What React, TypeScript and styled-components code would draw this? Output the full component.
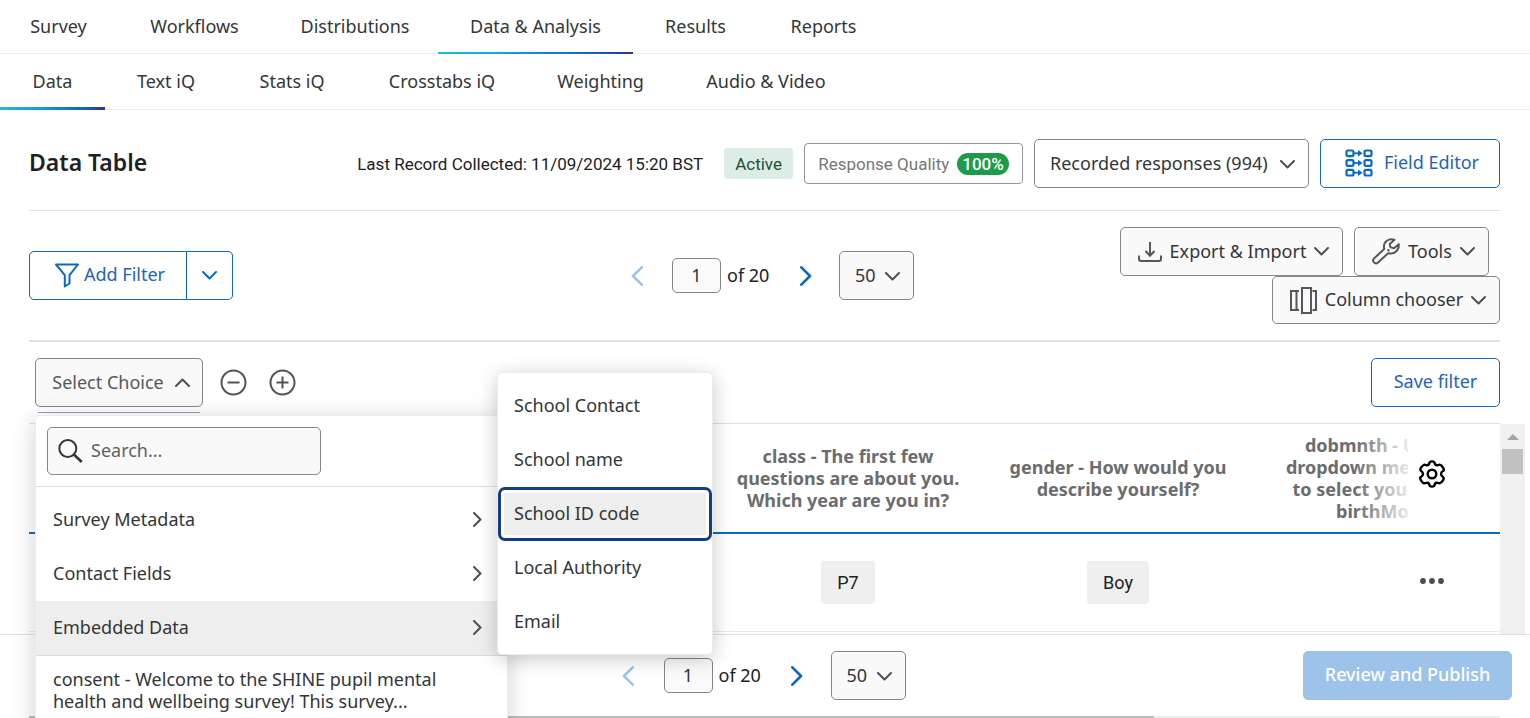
import React from "react";
import styled, { createGlobalStyle, css } from "styled-components";

const blue = "#0b6ac0";
const ink = "#32363a";

const GlobalStyle = createGlobalStyle`
  *, *::before, *::after { box-sizing: border-box; }
  body { margin: 0; background: #fff; }
  body, button, input, select {
    font-family: "Noto Sans", "Open Sans", sans-serif;
    font-size: 18px;
    line-height: 22px;
    color: ${ink};
  }
`;

const compact = css`
  font-family: Roboto, "Liberation Sans", sans-serif;
  font-size: 17px;
`;

const Page = styled.div`
  display: flex;
  flex-direction: column;
  height: 100vh;
  overflow: hidden;
`;

const Nav = styled.nav<{ $sub?: boolean }>`
  display: flex;
  height: ${(p) => (p.$sub ? 56 : 54)}px;
  flex: none;
  border-bottom: 1px solid #ececee;
`;

const Tab = styled.a<{ $w: number; $active?: boolean; $line?: number }>`
  display: flex;
  align-items: center;
  justify-content: center;
  width: ${(p) => p.$w}px;
  margin-bottom: -1px;
  color: ${ink};
  text-decoration: none;
  white-space: nowrap;
  border-bottom: ${(p) => p.$line || 2}px solid transparent;
  ${(p) =>
    p.$active &&
    css`
      border-image: linear-gradient(to right, #21c0bf, #12a0dc 35%, #1668bd 75%, #32318d) 1;
    `}
`;

const Main = styled.main`
  flex: 1;
  min-height: 0;
  display: flex;
  flex-direction: column;
  padding-left: 29px;
`;

const Section = styled.section`
  margin-right: 30px;
`;

const TitleRow = styled(Section)`
  display: flex;
  align-items: center;
  gap: 11px;
  padding: 29px 0 22px;
  border-bottom: 1px solid #e0e0e2;
`;

const Title = styled.h1`
  flex: 1;
  margin: 0;
  padding-bottom: 3px;
  font-size: 23px;
  line-height: 28px;
  font-weight: 600;
  color: #202124;
`;

const Collected = styled.p`
  ${compact}
  margin: 0 10px 0 0;
  color: #202124;
  white-space: nowrap;
`;

const Status = styled.span`
  ${compact}
  padding: 5px 11px 4px;
  border-radius: 4px;
  background: #dcede6;
  color: #1f4f38;
`;

const Quality = styled.button`
  ${compact}
  display: flex;
  align-items: center;
  justify-content: center;
  gap: 8px;
  width: 219px;
  height: 41px;
  padding: 0;
  border: 1px solid #949496;
  border-radius: 4px;
  background: #fff;
  color: #75777a;
  white-space: nowrap;
`;

const Pill = styled.span`
  padding: 0 5px;
  border-radius: 11px;
  background: #1f9a4b;
  color: #fff;
  font-weight: 500;
`;

const Button = styled.button<{ $w: number; $kind?: "plain" | "outline" | "primary"; $gap?: number; $inset?: boolean }>`
  display: flex;
  align-items: center;
  justify-content: center;
  gap: ${(p) => p.$gap || 8}px;
  width: ${(p) => p.$w}px;
  height: 49px;
  padding: 0 0 2px ${(p) => (p.$inset ? 4 : 0)}px;
  border: 1px solid #858688;
  border-radius: 5px;
  background: #f9f9f9;
  white-space: nowrap;
  ${(p) =>
    p.$kind === "outline" &&
    css`
      padding-bottom: 3px;
      border-color: ${blue};
      background: #fff;
      color: #2264bd;
    `}
  ${(p) =>
    p.$kind === "primary" &&
    css`
      padding-bottom: 3px;
      border-color: #9dc3ea;
      background: #9dc3ea;
      color: #fff;
      font-weight: 500;
    `}

  svg { margin-top: 2px; }
`;

const SplitButton = styled.div`
  display: flex;

  button:first-child { border-radius: 5px 0 0 5px; }
  button:last-child { border-radius: 0 5px 5px 0; border-left: 0; }
`;

const SelectBox = styled.label<{ $w: number; $filled?: boolean }>`
  position: relative;
  display: block;
  width: ${(p) => p.$w}px;

  select {
    appearance: none;
    display: block;
    width: 100%;
    height: 49px;
    padding: 0 0 2px 15px;
    border: 1px solid #858688;
    border-radius: 5px;
    background: ${(p) => (p.$filled ? "#f9f9f9" : "#fff")};
  }
  svg {
    position: absolute;
    right: 14px;
    top: 21px;
    pointer-events: none;
  }
`;

const ToolBar = styled(Section)`
  display: grid;
  grid-template-columns: 1fr auto 1fr;
  align-items: center;
  padding: 16px 0;
  border-bottom: 2px solid #e2e2e4;
`;

const Tools = styled.div`
  display: flex;
  flex-direction: column;
  align-items: flex-end;

  > button { height: 48px; }
`;

const ToolLine = styled.div`
  display: flex;
  gap: 11px;
  margin-right: 11px;
`;

const PagerBox = styled.div`
  display: flex;
  align-items: center;
`;

const IconButton = styled.button`
  display: flex;
  align-items: center;
  justify-content: center;
  padding: 0;
  border: 0;
  background: none;
`;

const PageArrow = styled(IconButton)`
  width: 43px;
  height: 49px;
`;

const PageNumber = styled.input`
  width: 49px;
  height: 35px;
  margin-left: 14px;
  padding: 0 0 2px;
  border: 1px solid #858688;
  border-radius: 5px;
  background: #fafafa;
  text-align: center;
`;

const PageTotal = styled.span`
  width: 44px;
  margin: 0 13px 0 6px;
  padding-bottom: 2px;
  color: #202124;
  white-space: nowrap;
`;

const FilterRow = styled(Section)`
  display: flex;
  align-items: center;
  gap: 22px;
  padding: 16px 0 16px 6px;

  > button:last-child { margin-left: auto; }
`;

const Picker = styled.div`
  position: relative;
  margin-right: -5px;

  > button { color: #55585b; }
`;

const FocusLine = styled.span`
  position: absolute;
  top: 54px;
  left: 3px;
  right: 3px;
  height: 1px;
  background: #8c9fc9;
`;

const Menu = styled.div`
  position: absolute;
  z-index: 5;
  top: 57px;
  left: 0;
  width: 473px;
  border: 1px solid #ececee;
  border-radius: 4px;
  background: #fff;
  box-shadow: 0 4px 24px rgba(0, 0, 0, 0.18);
`;

const SearchArea = styled.div`
  padding: 11px 11px 11px;
  border-bottom: 1px solid #e0e0e2;
`;

const SearchField = styled.label`
  display: flex;
  align-items: center;
  gap: 8px;
  width: 274px;
  height: 48px;
  padding-left: 10px;
  border: 1px solid #858688;
  border-radius: 5px;
  background: #f9f9f9;

  input {
    flex: 1;
    min-width: 0;
    padding: 0 0 2px;
    border: 0;
    outline: 0;
    background: none;
  }
  input::placeholder { color: #5f6265; opacity: 1; }
`;

const MenuItem = styled.button<{ $active?: boolean }>`
  display: flex;
  align-items: center;
  justify-content: space-between;
  width: 100%;
  height: 54px;
  padding: 0 25px 2px 17px;
  border: 0;
  background: ${(p) => (p.$active ? "#eee" : "none")};
  text-align: left;
`;

const MenuList = styled.div`
  padding-top: 6px;
  border-bottom: 1px solid #dcdcde;
`;

const QuestionItem = styled(MenuItem)`
  height: 80px;
  padding-right: 50px;
  align-items: flex-start;
  padding-top: 12px;
`;

const SubMenu = styled.div`
  position: absolute;
  z-index: 6;
  top: 14px;
  left: 462px;
  width: 216px;
  padding: 6px 0 5px;
  border: 1px solid #ececee;
  border-radius: 5px;
  background: #fff;
  box-shadow: 0 4px 20px rgba(0, 0, 0, 0.22);

  ${MenuItem} { padding: 0 16px 2px; }
`;

const FocusedItem = styled(MenuItem)`
  border: 3px solid #123f84;
  border-radius: 7px;
  background: #eee;
  box-shadow: inset 0 0 0 3px #fff;

  ${SubMenu} & { padding: 0 13px 2px; }
`;

const TableArea = styled.div`
  flex: 1;
  min-height: 0;
  display: flex;
  margin-right: 5px;
`;

const DataTable = styled.table`
  flex: 1;
  align-self: flex-start;
  table-layout: fixed;
  width: 100%;
  border-collapse: separate;
  border-spacing: 0;
  border-top: 1px solid #e0e0e2;

  th {
    height: 110px;
    padding: 0;
    border-bottom: 2px solid ${blue};
    color: #6a6c6f;
    font-weight: 700;
    line-height: 22px;
  }
  td {
    height: 98px;
    padding: 0;
    border-bottom: 1px solid #e8e8ea;
    text-align: center;
  }
`;

const Col = styled.col<{ $w?: number }>`
  width: ${(p) => (p.$w ? `${p.$w}px` : "auto")};
`;

const Heading = styled.div`
  width: 270px;
  padding-bottom: 1px;
  text-align: center;
  white-space: pre-line;
`;

const RowAction = styled(IconButton)`
  width: 48px;
  height: 48px;
  margin: 0 0 4px 53px;
`;

const FadeCell = styled.th`
  position: relative;
  background: linear-gradient(to right, rgba(255, 255, 255, 0), rgba(255, 255, 255, 0.85) 53px, #fff 53px);

  ${RowAction} { margin-bottom: 8px; }
`;

const Value = styled.span`
  display: inline-block;
  padding: 11px 16px 10px;
  border-radius: 4px;
  background: #efefef;
  color: #202124;
  font-family: Roboto, "Liberation Sans", sans-serif;
`;

const ScrollTrack = styled.div`
  display: flex;
  flex-direction: column;
  align-items: center;
  width: 25px;
  margin-top: 1px;
  padding-top: 10px;
  background: #f0f0f0;
`;

const ScrollThumb = styled.div`
  width: 21px;
  height: 25px;
  margin-top: 9px;
  background: #c1c1c1;
`;

const Footer = styled.footer`
  flex: none;
  display: grid;
  grid-template-columns: 1fr auto 1fr;
  align-items: center;
  padding: 16px 18px 16px 0;
  border-top: 1px solid #e0e0e2;

  > button { grid-column: 3; justify-self: end; }
  > div { grid-column: 2; }
`;

const BottomScroll = styled.div`
  flex: none;
  height: 2px;
  margin: 0 30px 0 29px;
  background: #eee;
`;

const BottomThumb = styled.div`
  width: 76.5%;
  height: 2px;
  background: #bdbdbd;
`;

type Dir = "up" | "down" | "left" | "right";

function Chevron({ dir = "down", color = "#4d5054", big }: { dir?: Dir; color?: string; big?: boolean }) {
  const sideways = dir === "left" || dir === "right";
  const points = { up: "1,8 7.5,1.5 14,8", down: "1,1 7.5,7.5 14,1", left: "8,1 1.5,7.5 8,14", right: "1,1 7.5,7.5 1,14" }[dir];
  const w = sideways ? 9 : 15;
  const h = sideways ? 15 : 9;
  return (
    <svg
      width={big ? 12 : w}
      height={big ? 20 : h}
      viewBox={`0 0 ${w} ${h}`}
      fill="none"
      stroke={color}
      strokeWidth={2}
      strokeLinejoin="round"
      strokeLinecap="round"
      aria-hidden="true"
    >
      <polyline points={points} />
    </svg>
  );
}

const FieldIcon = () => (
  <svg width="28" height="28" viewBox="0 0 28 28" fill="none" stroke={blue} strokeWidth="2.2" aria-hidden="true">
    {[1.5, 11.2, 20.9].map((y) => (
      <g key={y}>
        <rect x="1.5" y={y} width="7" height="5.6" rx="1.500" />
        <rect x="19.5" y={y} width="7" height="5.6" rx="1.500" />
        <path d={`M9 ${y + 2.8}h5`} strokeWidth="1.800" />
        <path d={`M13 ${y - 0.4}l4.600 3.200-4.600 3.200z`} fill={blue} stroke="none" />
      </g>
    ))}
  </svg>
);

const FunnelIcon = () => (
  <svg width="24" height="25" viewBox="0 0 24 25" fill="none" stroke={blue} strokeWidth="2" strokeLinejoin="round" aria-hidden="true">
    <path d="M1 1.5h22l-8.5 10.7v8.3L9.8 23.5V12.2Z" />
  </svg>
);

const DownloadIcon = () => (
  <svg width="24" height="22" viewBox="0 0 24 22" fill="none" stroke="#55575a" strokeWidth="2" aria-hidden="true">
    <path d="M12 1v14M7.5 10l4.5 4.8 4.5-4.8" />
    <path d="M1 14.500v3.500q0 2 2 2h18q2 0 2-2v-3.500" />
  </svg>
);

const WrenchIcon = () => (
  <svg width="28" height="27" viewBox="0 0 28 27" fill="none" stroke="#55575a" strokeWidth="2" strokeLinejoin="round" aria-hidden="true">
    <path d="M22.500 1.800C17.500-.3 10.500 3.500 12.200 11L2 20.500c-2.500 2.500 1 6.500 4 4l10.200-9.300c6.500 1.800 11-3.200 10.600-9L22 10.200l-3.400-.8-.9-3.300Z" />
    <path d="M15.500 11.500l1.800 1.600" />
  </svg>
);

const ColumnsIcon = () => (
  <svg width="27" height="27" viewBox="0 0 27 27" fill="none" stroke="#55575a" strokeWidth="2" aria-hidden="true">
    <path d="M9 4H1v19h8M6.500 4v19" />
    <rect x="12" y="1" width="9" height="25" />
    <path d="M22.500 4H26v19h-3.500" />
  </svg>
);

const RoundIcon = ({ plus }: { plus?: boolean }) => (
  <svg width="27" height="27" viewBox="0 0 27 27" fill="none" stroke="#515356" strokeWidth="2" aria-hidden="true">
    <circle cx="13.500" cy="13.500" r="12" />
    <path d={plus ? "M7.500 13.500h12M13.500 7.500v12" : "M7.500 13.500h12"} />
  </svg>
);

const SearchIcon = () => (
  <svg width="25" height="24" viewBox="0 0 25 24" fill="none" stroke="#32363a" strokeWidth="2" aria-hidden="true">
    <circle cx="9.800" cy="9.500" r="8.500" />
    <path d="M15.800 15.500l8 7.500" strokeWidth="2.500" />
  </svg>
);

const GearIcon = () => (
  <svg width="26" height="28" viewBox="0 0 26 28" fill="none" stroke="#000" strokeWidth="2.400" strokeLinejoin="round" aria-hidden="true">
    <path d="M10.300 3.400Q10.600 1.400 13 1.400T15.700 3.400Q16.300 5.800 18.800 5.200L20.800 4.700Q22.300 4.700 24 7.700T24 11Q22 12 22 14T24 17Q25.300 18.300 24 20.300T20.800 23.300L18.800 22.800Q16.300 22.200 15.700 24.600Q15.400 26.600 13 26.600T10.300 24.600Q9.700 22.200 7.200 22.800L5.200 23.300Q3.700 23.300 2 20.300T2 17Q4 16 4 14T2 11Q.7 9.700 2 7.700T5.200 4.700L7.200 5.200Q9.700 5.800 10.300 3.400Z" />
    <circle cx="13" cy="14" r="4.300" />
  </svg>
);

const DotsIcon = () => (
  <svg width="24" height="6" viewBox="0 0 24 6" fill="#4b4d50" aria-hidden="true">
    <circle cx="3" cy="3" r="2.900" />
    <circle cx="12" cy="3" r="2.900" />
    <circle cx="21" cy="3" r="2.900" />
  </svg>
);

const SizeSelect = styled.div`
  margin-left: 12px;
`;

function Pager() {
  return (
    <PagerBox>
      <PageArrow aria-label="Previous page">
        <Chevron dir="left" color="#9dc3ea" big />
      </PageArrow>
      <PageNumber aria-label="Page" defaultValue="1" />
      <PageTotal>of 20</PageTotal>
      <PageArrow aria-label="Next page">
        <Chevron dir="right" color={blue} big />
      </PageArrow>
      <SizeSelect>
        <SelectBox $w={75} $filled>
          <select aria-label="Rows per page">
            <option>50</option>
          </select>
          <Chevron />
        </SelectBox>
      </SizeSelect>
    </PagerBox>
  );
}

const topTabs = [
  { label: "Survey", w: 117 },
  { label: "Workflows", w: 155 },
  { label: "Distributions", w: 166 },
  { label: "Data & Analysis", w: 195, active: true },
  { label: "Results", w: 125 },
  { label: "Reports", w: 131 },
];

const subTabs = [
  { label: "Data", w: 105, active: true },
  { label: "Text iQ", w: 122 },
  { label: "Stats iQ", w: 130 },
  { label: "Crosstabs iQ", w: 170 },
  { label: "Weighting", w: 147 },
  { label: "Audio & Video", w: 184 },
];

export default function App() {
  return (
    <Page>
      <GlobalStyle />
      <Nav aria-label="Project">
        {topTabs.map((t) => (
          <Tab key={t.label} href="#" $w={t.w} $active={t.active}>
            {t.label}
          </Tab>
        ))}
      </Nav>
      <Nav $sub aria-label="Data and analysis">
        {subTabs.map((t) => (
          <Tab key={t.label} href="#" $w={t.w} $active={t.active} $line={3}>
            {t.label}
          </Tab>
        ))}
      </Nav>

      <Main>
        <TitleRow>
          <Title>Data Table</Title>
          <Collected>Last Record Collected: 11/09/2024 15:20 BST</Collected>
          <Status>Active</Status>
          <Quality>
            Response Quality <Pill>100%</Pill>
          </Quality>
          <SelectBox $w={275}>
            <select aria-label="Responses">
              <option>Recorded responses (994)</option>
            </select>
            <Chevron />
          </SelectBox>
          <Button $w={180} $kind="outline" $gap={11} $inset>
            <FieldIcon />
            Field Editor
          </Button>
        </TitleRow>

        <ToolBar>
          <SplitButton>
            <Button $w={158} $kind="outline" $gap={5} $inset>
              <FunnelIcon />
              Add Filter
            </Button>
            <Button $w={46} $kind="outline" aria-label="More filters">
              <Chevron color={blue} />
            </Button>
          </SplitButton>
          <Pager />
          <Tools>
            <ToolLine>
              <Button $w={223} $inset>
                <DownloadIcon />
                Export &amp; Import
                <Chevron />
              </Button>
              <Button $w={135} $inset>
                <WrenchIcon />
                Tools
                <Chevron />
              </Button>
            </ToolLine>
            <Button $w={228} $inset>
              <ColumnsIcon />
              Column chooser
              <Chevron />
            </Button>
          </Tools>
        </ToolBar>

        <FilterRow>
          <Picker>
            <Button $w={168} $gap={11} $inset aria-expanded="true">
              Select Choice
              <Chevron dir="up" />
            </Button>
            <FocusLine />
            <Menu>
              <SearchArea>
                <SearchField>
                  <SearchIcon />
                  <input type="text" placeholder="Search..." aria-label="Search" />
                </SearchField>
              </SearchArea>
              <MenuList>
                <MenuItem>
                  Survey Metadata
                  <Chevron dir="right" />
                </MenuItem>
                <MenuItem>
                  Contact Fields
                  <Chevron dir="right" />
                </MenuItem>
                <MenuItem $active>
                  Embedded Data
                  <Chevron dir="right" />
                </MenuItem>
              </MenuList>
              <QuestionItem>
                consent - Welcome to the SHINE pupil mental health and wellbeing survey! This survey...
              </QuestionItem>
            </Menu>
            <SubMenu>
              <MenuItem>School Contact</MenuItem>
              <MenuItem>School name</MenuItem>
              <FocusedItem>School ID code</FocusedItem>
              <MenuItem>Local Authority</MenuItem>
              <MenuItem>Email</MenuItem>
            </SubMenu>
          </Picker>
          <IconButton aria-label="Remove condition">
            <RoundIcon />
          </IconButton>
          <IconButton aria-label="Add condition">
            <RoundIcon plus />
          </IconButton>
          <Button $w={129} $kind="outline">
            Save filter
          </Button>
        </FilterRow>

        <TableArea>
          <DataTable>
            <colgroup>
              <Col />
              <Col $w={270} />
              <Col $w={270} />
              <Col $w={102} />
              <Col $w={145} />
            </colgroup>
            <thead>
              <tr>
                <th />
                <th>
                  <Heading>{"class - The first few\nquestions are about you.\nWhich year are you in?"}</Heading>
                </th>
                <th>
                  <Heading>{"gender - How would you\ndescribe yourself?"}</Heading>
                </th>
                <th>
                  <Heading>{"dobmnth - Use the\ndropdown menu boxes\nto select your date of\nbirthMonth"}</Heading>
                </th>
                <FadeCell>
                  <RowAction aria-label="Table settings">
                    <GearIcon />
                  </RowAction>
                </FadeCell>
              </tr>
            </thead>
            <tbody>
              <tr>
                <td />
                <td>
                  <Value>P7</Value>
                </td>
                <td>
                  <Value>Boy</Value>
                </td>
                <td />
                <td>
                  <RowAction aria-label="Row actions">
                    <DotsIcon />
                  </RowAction>
                </td>
              </tr>
            </tbody>
          </DataTable>
          <ScrollTrack>
            <svg width="12" height="6" viewBox="0 0 12 6" fill="#a3a3a3" aria-hidden="true">
              <path d="M6 0l6 6H0z" />
            </svg>
            <ScrollThumb />
          </ScrollTrack>
        </TableArea>
      </Main>

      <Footer>
        <Pager />
        <Button $w={209} $kind="primary">
          Review and Publish
        </Button>
      </Footer>
      <BottomScroll>
        <BottomThumb />
      </BottomScroll>
    </Page>
  );
}
